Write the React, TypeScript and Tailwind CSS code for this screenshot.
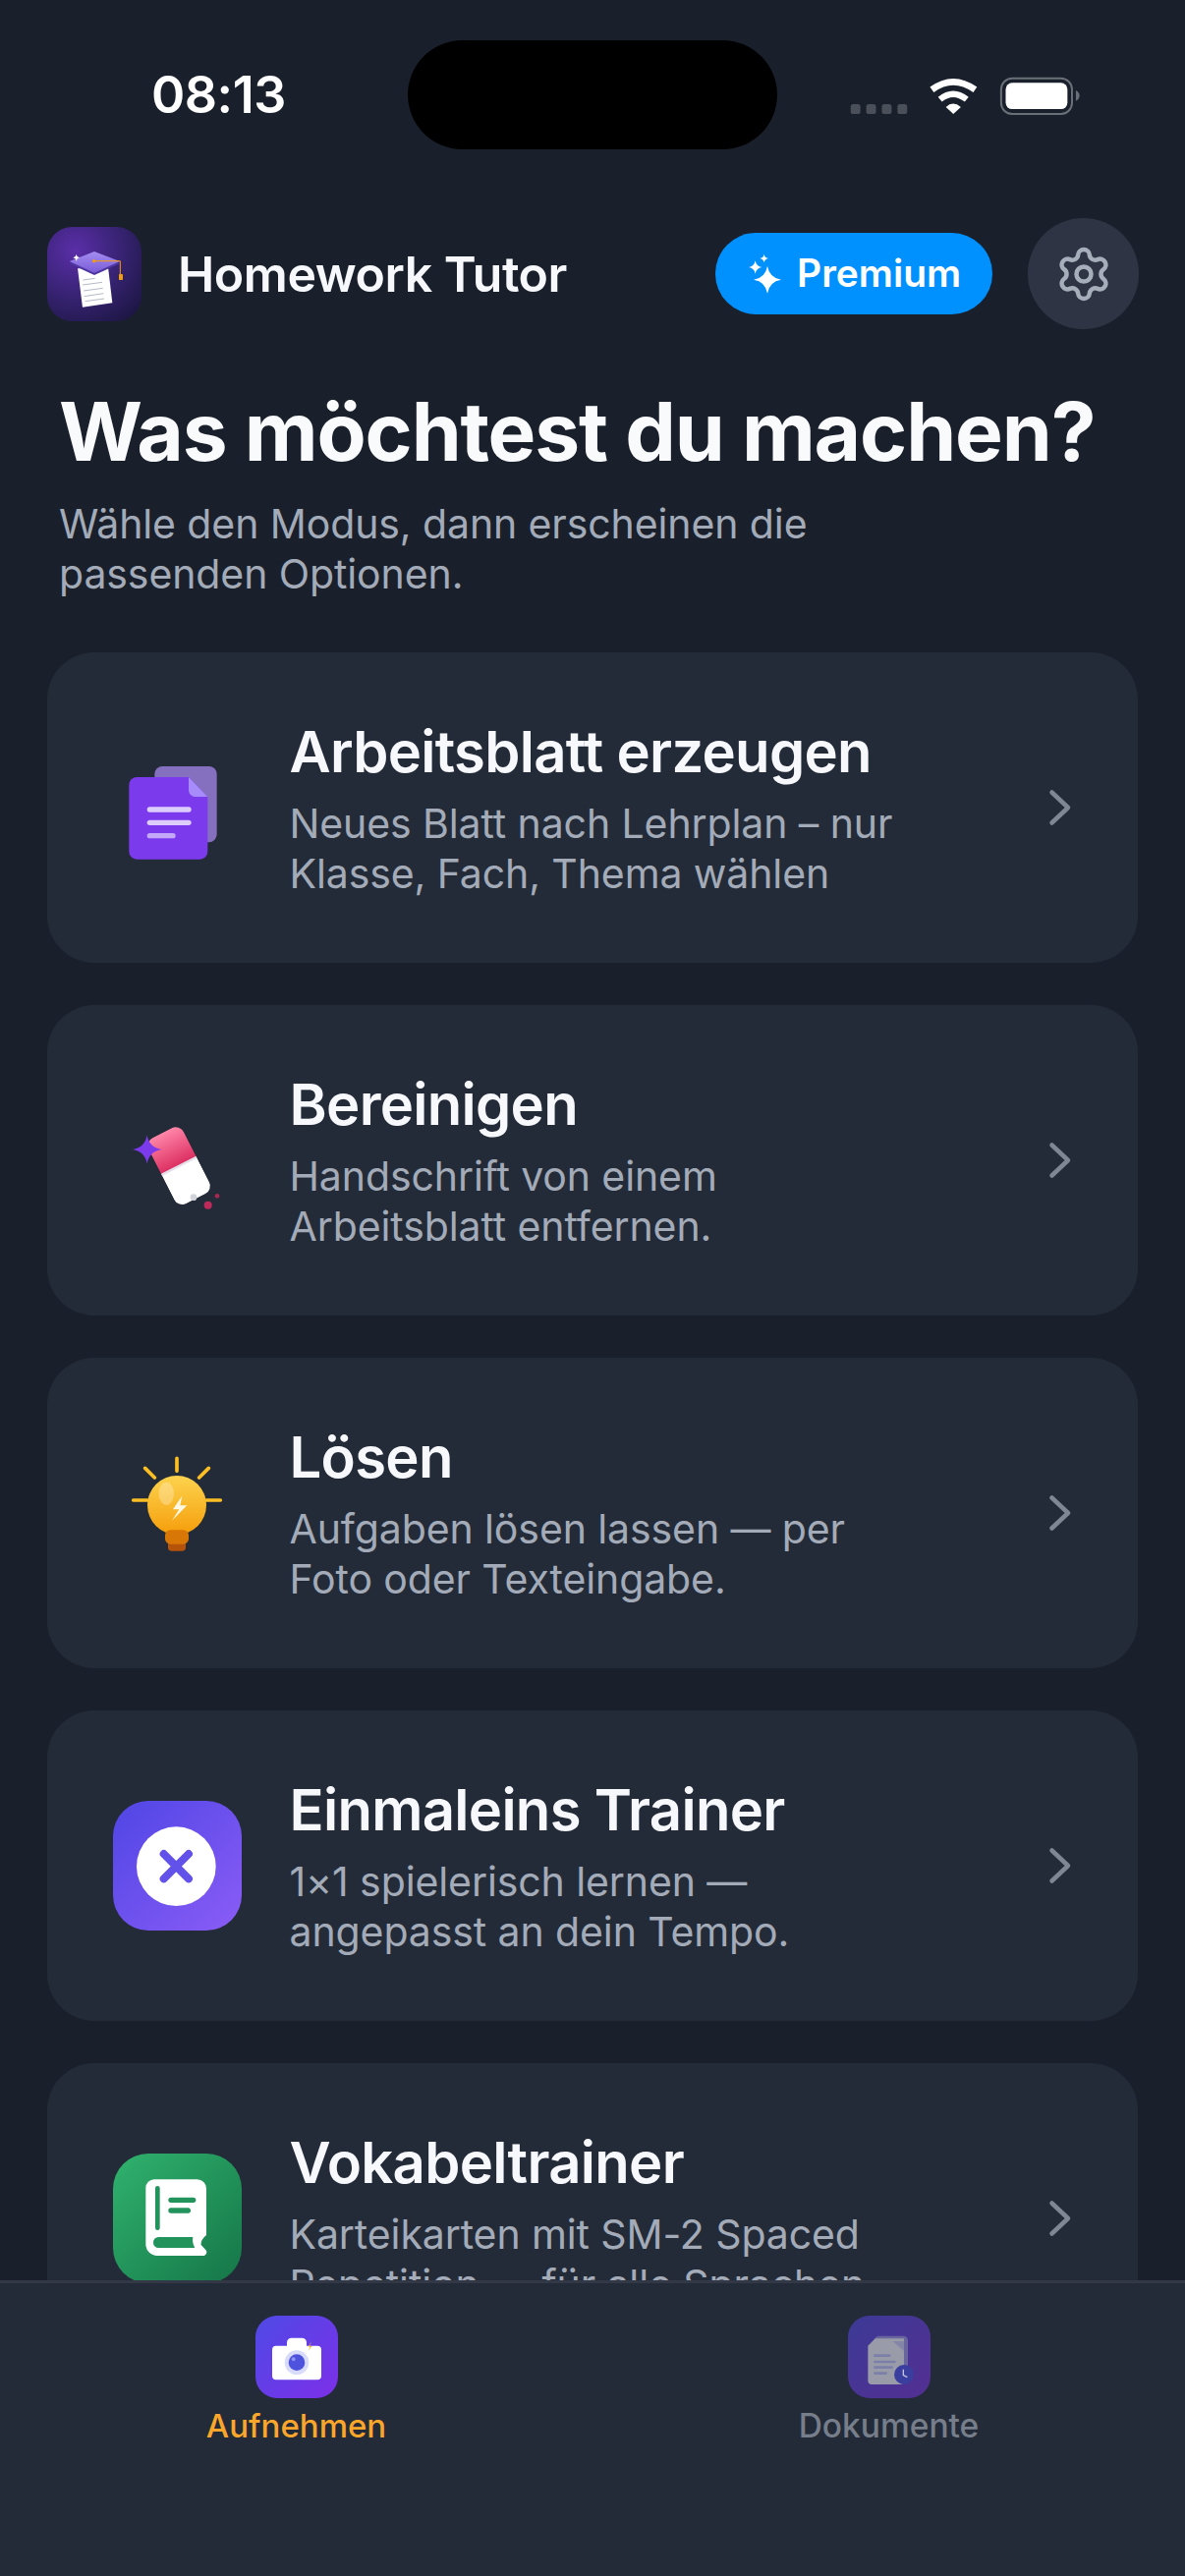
import { ReactNode } from "react"
import { Settings } from "lucide-react"

// 4 point star used by the sparkle icons
const star = (cx: number, cy: number, r: number) =>
  `M${cx} ${cy - r}Q${cx + r * 0.14} ${cy - r * 0.14} ${cx + r} ${cy}Q${cx + r * 0.14} ${cy + r * 0.14} ${cx} ${cy + r}Q${cx - r * 0.14} ${cy + r * 0.14} ${cx - r} ${cy}Q${cx - r * 0.14} ${cy - r * 0.14} ${cx} ${cy - r}Z`

function StatusIcons() {
  return (
    <svg width="243" height="43" viewBox="480 50 730 130" className="mt-[77px] ml-[69px]">
      {[495, 543, 591, 639].map((x) => (
        <rect key={x} x={x} y={138} width={30} height={30} rx={8} fill="#4a4f5a" />
      ))}
      <path d="M745 93Q810 45 878 93" fill="none" stroke="#fff" strokeWidth={20} />
      <path d="M770 123Q810 90 852 123" fill="none" stroke="#fff" strokeWidth={19} />
      <path d="M788 147Q810 126 834 147L811 168Z" fill="#fff" />
      <rect x={958} y={58} width={218} height={110} rx={34} fill="none" stroke="#6b7078" strokeWidth={6} />
      <rect x={972} y={72} width={190} height={81} rx={20} fill="#fff" />
      <path d="M1188 95Q1199 100 1199 111Q1199 122 1188 128Z" fill="#6b7078" />
    </svg>
  )
}

function LogoIcon() {
  return (
    <svg width="96" height="96" viewBox="54 63 288 288" className="shrink-0">
      <defs>
        <radialGradient id="logoBg" cx="0.3" cy="0.25" r="0.95">
          <stop offset="0" stopColor="#5a2ea8" />
          <stop offset="0.55" stopColor="#35226f" />
          <stop offset="1" stopColor="#1b1540" />
        </radialGradient>
        <linearGradient id="capFill" x1="0" y1="0" x2="0" y2="1">
          <stop offset="0" stopColor="#a48cf0" />
          <stop offset="1" stopColor="#7a5cd8" />
        </linearGradient>
      </defs>
      <rect x={54} y={63} width={288} height={288} rx={76} fill="url(#logoBg)" />
      <path d="M147 190L240 185L253 295L162 308Z" fill="#fff" />
      <path d="M163 225L200 220M162 240L222 232M165 258L224 250M167 275L226 266M170 290L228 282" stroke="#b4bac6" strokeWidth={3} fill="none" />
      <path d="M160 185Q198 225 238 183L240 175H158Z" fill="#6b42c4" />
      <path d="M198 146L276 175L198 210L122 175Z" fill="#4e36a0" />
      <path d="M198 138L276 168L198 203L122 168Z" fill="url(#capFill)" />
      <path d="M197 167H277V208" fill="none" stroke="#f59e0b" strokeWidth={3} />
      <circle cx={197} cy={167} r={5} fill="#f59e0b" />
      <rect x={273} y={207} width={12} height={18} rx={2} fill="#f59e0b" />
      <path d={star(143, 157, 10)} fill="#fff" />
    </svg>
  )
}

function SparkIcon() {
  return (
    <svg width="34" height="41" viewBox="185 595 102 123" className="shrink-0">
      <path d={star(242, 675, 42)} fill="#fff" />
      <path d={star(205, 637, 20)} fill="#fff" />
      <path d={star(232, 610, 13)} fill="#fff" />
    </svg>
  )
}

function DocIcon() {
  return (
    <svg width="132" height="132" viewBox="45 48 396 396">
      <rect x={172} y={120} width={190} height={232} rx={24} fill="#8570c0" />
      <path d="M118 153H276L334 213V380A24 24 0 0 1 310 404H118A24 24 0 0 1 94 380V177A24 24 0 0 1 118 153Z" fill="#7c3aed" />
      <path d="M276 153L334 213H296A20 20 0 0 1 276 193Z" fill="#a78bfa" />
      <rect x={149} y={244} width={135} height={16} rx={8} fill="#dccdfd" />
      <rect x={149} y={284} width={135} height={16} rx={8} fill="#dccdfd" />
      <rect x={149} y={324} width={87} height={16} rx={8} fill="#c4a8fa" />
    </svg>
  )
}

function EraserIcon() {
  return (
    <svg width="132" height="132" viewBox="45 16 396 396">
      <defs>
        <linearGradient id="eraserPink" x1="0" y1="0" x2="0" y2="1">
          <stop offset="0" stopColor="#ff86a8" />
          <stop offset="1" stopColor="#dc2f62" />
        </linearGradient>
        <clipPath id="eraserClip">
          <rect x={186} y={118} width={120} height={226} rx={28} />
        </clipPath>
      </defs>
      <g transform="rotate(-27 246 230)">
        <g clipPath="url(#eraserClip)">
          <rect x={186} y={118} width={120} height={112} fill="url(#eraserPink)" />
          <rect x={186} y={230} width={120} height={114} fill="#fff" />
          <rect x={186} y={228} width={120} height={7} fill="#e4e1ea" />
        </g>
      </g>
      <circle cx={291} cy={327} r={10} fill="#d1d5db" />
      <circle cx={335} cy={351} r={12} fill="#be2a5a" />
      <circle cx={363} cy={323} r={7} fill="#a8284f" />
      <path d={star(149, 181, 44)} fill="#7c3aed" />
    </svg>
  )
}

function BulbIcon() {
  return (
    <svg width="132" height="132" viewBox="45 45 396 396">
      <defs>
        <linearGradient id="bulbFill" x1="0" y1="0" x2="0" y2="1">
          <stop offset="0" stopColor="#fdd34e" />
          <stop offset="1" stopColor="#f59e0b" />
        </linearGradient>
      </defs>
      <path d="M240 76V115M143 106L172 135M337 106L308 135M107 204H150M330 204H373" stroke="#fbbf24" strokeWidth={11} strokeLinecap="round" fill="none" />
      <circle cx={240} cy={219} r={90} fill="url(#bulbFill)" />
      <ellipse cx={208} cy={184} rx={23} ry={35} fill="#fff" fillOpacity={0.27} />
      <rect x={213} y={330} width={54} height={29} rx={10} fill="#b45309" />
      <rect x={204} y={295} width={72} height={43} rx={16} fill="#d97706" />
      <path d="M256 191L228 232H247L225 266L271 220H250Z" fill="#fff8e4" />
    </svg>
  )
}

function TimesIcon() {
  return (
    <svg width="132" height="132" viewBox="45 36 396 396">
      <defs>
        <linearGradient id="timesBg" x1="0" y1="0" x2="1" y2="1">
          <stop offset="0" stopColor="#4f46e5" />
          <stop offset="1" stopColor="#8b5cf6" />
        </linearGradient>
      </defs>
      <rect x={45} y={36} width={393} height={396} rx={108} fill="url(#timesBg)" />
      <circle cx={238} cy={236} r={121} fill="#fff" />
      <path d="M200 198L276 274M276 198L200 274" stroke="#6352ea" strokeWidth={24} strokeLinecap="round" />
    </svg>
  )
}

function BookIcon() {
  return (
    <svg width="132" height="132" viewBox="45 36 396 396" className="shrink-0">
      <defs>
        <linearGradient id="bookBg" x1="0" y1="0" x2="1" y2="1">
          <stop offset="0" stopColor="#30b26e" />
          <stop offset="1" stopColor="#157547" />
        </linearGradient>
      </defs>
      <rect x={45} y={36} width={393} height={396} rx={108} fill="url(#bookBg)" />
      <path d="M171 115H302A28 28 0 0 1 330 143V285Q312 300 314 315L328 330Q336 340 324 348H180A35 35 0 0 1 145 313V141A26 26 0 0 1 171 115Z" fill="#fff" />
      <rect x={174} y={135} width={14} height={135} rx={7} fill="#23935c" />
      <rect x={214} y={170} width={84} height={16} rx={8} fill="#23935c" />
      <rect x={214} y={202} width={68} height={16} rx={8} fill="#23935c" />
      <path d="M184 291H289Q286 308 295 324H184A16 16 0 0 1 168 308V307A16 16 0 0 1 184 291Z" fill="#23935c" />
    </svg>
  )
}

function CameraIcon() {
  return (
    <svg width="84" height="84" viewBox="90 50 252 252">
      <defs>
        <linearGradient id="camBg" x1="0" y1="0" x2="1" y2="1">
          <stop offset="0" stopColor="#4f4ae6" />
          <stop offset="1" stopColor="#7c2fe8" />
        </linearGradient>
      </defs>
      <rect x={90} y={50} width={252} height={252} rx={66} fill="url(#camBg)" />
      <rect x={186} y={118} width={60} height={40} rx={14} fill="#fff" />
      <rect x={141} y={142} width={150} height={104} rx={12} fill="#fff" />
      <circle cx={216} cy={193} r={37} fill="#d8dcfa" />
      <circle cx={216} cy={193} r={25} fill="#4f52dc" />
      <circle cx={206} cy={183} r={6} fill="#8f92f2" />
      <path d="M262 127L255 143H263L250 158L257 145H251Z" fill="#fbbf24" />
    </svg>
  )
}

function ArchiveIcon() {
  return (
    <svg width="84" height="84" viewBox="69 50 252 252">
      <defs>
        <linearGradient id="docBg" x1="0" y1="0" x2="1" y2="1">
          <stop offset="0" stopColor="#3d3a96" />
          <stop offset="1" stopColor="#532f92" />
        </linearGradient>
      </defs>
      <rect x={69} y={50} width={252} height={252} rx={66} fill="url(#docBg)" />
      <rect x={150} y={112} width={102} height={130} rx={14} fill="#69669f" />
      <path d="M152 120H240V248A12 12 0 0 1 228 260H142A12 12 0 0 1 130 248V142Z" fill="#9a9ba8" />
      <path d="M205 128H240V158Z" fill="#8486a8" />
      <rect x={147} y={168} width={53} height={8} rx={4} fill="#7c80a8" />
      <rect x={147} y={187} width={68} height={8} rx={4} fill="#7c80a8" />
      <rect x={147} y={204} width={60} height={8} rx={4} fill="#7c80a8" />
      <rect x={147} y={222} width={42} height={8} rx={4} fill="#7c80a8" />
      <circle cx={240} cy={230} r={30} fill="#3a3e9e" />
      <path d="M238 214V232L250 238" fill="none" stroke="#c3c5dc" strokeWidth={4} />
    </svg>
  )
}

function Chevron() {
  return (
    <svg width="24" height="38" viewBox="0 0 24 38" className="shrink-0">
      <path d="M3.5 3.5L20 19L3.5 34.5" fill="none" stroke="#7f8794" strokeWidth={4.5} strokeLinecap="round" strokeLinejoin="round" />
    </svg>
  )
}

type Mode = { title: string; lines: string[]; icon: ReactNode }

const modes: Mode[] = [
  { title: "Arbeitsblatt erzeugen", lines: ["Neues Blatt nach Lehrplan – nur", "Klasse, Fach, Thema wählen"], icon: <DocIcon /> },
  { title: "Bereinigen", lines: ["Handschrift von einem", "Arbeitsblatt entfernen."], icon: <EraserIcon /> },
  { title: "Lösen", lines: ["Aufgaben lösen lassen — per", "Foto oder Texteingabe."], icon: <BulbIcon /> },
  { title: "Einmaleins Trainer", lines: ["1×1 spielerisch lernen —", "angepasst an dein Tempo."], icon: <TimesIcon /> },
  { title: "Vokabeltrainer", lines: ["Karteikarten mit SM-2 Spaced", "Repetition — für alle Sprachen"], icon: <BookIcon /> },
]

export default function App() {
  return (
    <div className="flex h-[2622px] w-[1206px] flex-col overflow-hidden bg-[#1a202b] font-['Inter',sans-serif] text-white">
      {/* status bar */}
      <div className="flex h-[222px] shrink-0 items-start">
        <div className="mt-[66px] w-[415px] pl-[154px] text-[52px] leading-[62px] font-semibold tracking-[-0.5px]">08:13</div>
        <div className="mt-[41px] h-[111px] w-[376px] rounded-[56px] bg-black" />
        <StatusIcons />
      </div>

      {/* header */}
      <div className="flex h-[113px] shrink-0 items-center pr-[47px] pl-[48px]">
        <LogoIcon />
        <div className="ml-[37px] flex-1 text-[50px] leading-[60px] font-semibold tracking-[-0.45px] text-[#f7f8fb]">Homework Tutor</div>
        <div className="flex h-[83px] w-[282px] items-center gap-[15px] rounded-full bg-[#0091ff] pl-[34px] text-[39px] font-semibold">
          <SparkIcon />
          <span>Premium</span>
        </div>
        <div className="ml-[36px] flex h-[113px] w-[113px] items-center justify-center rounded-full bg-[#2e3444]">
          <Settings size={60} strokeWidth={1.8} color="#a7aebb" />
        </div>
      </div>

      {/* heading */}
      <h1 className="mt-[57px] shrink-0 pl-[60px] text-[82px] leading-[96px] font-bold tracking-[-1.15px] text-[#f9fafb]">Was möchtest du machen?</h1>
      <p className="mt-[20px] shrink-0 pl-[60px] text-[41px] leading-[51px] tracking-[-0.1px] text-[#a3abb8]">
        Wähle den Modus, dann erscheinen die
        <br />
        passenden Optionen.
      </p>

      {/* mode list, cut off by the tab bar */}
      <div className="mt-[54px] flex min-h-0 flex-1 flex-col gap-[43px] overflow-hidden px-[48px]">
        {modes.map((m) => (
          <div key={m.title} className="flex h-[316px] shrink-0 items-center rounded-[48px] bg-[#242b38] pr-[67px] pl-[67px]">
            <div className="h-[132px] w-[132px] shrink-0">{m.icon}</div>
            <div className="ml-[47.5px] flex-1">
              <div className="text-[58px] leading-[72px] font-semibold tracking-[-0.7px] text-[#f7f8fb]">{m.title}</div>
              <div className="mt-[12px] text-[41px] leading-[51px] tracking-[-0.1px] text-[#a3abb8]">
                {m.lines.map((line) => (
                  <div key={line}>{line}</div>
                ))}
              </div>
            </div>
            <Chevron />
          </div>
        ))}
      </div>

      {/* tab bar */}
      <div className="grid h-[301px] shrink-0 grid-cols-2 border-t-[3px] border-[#323846] bg-[#242b38] pt-[33px]">
        <div className="flex flex-col items-center">
          <CameraIcon />
          <span className="mt-[8px] text-[33px] leading-[40px] font-medium text-[#f9a62b]">Aufnehmen</span>
        </div>
        <div className="flex flex-col items-center">
          <ArchiveIcon />
          <span className="mt-[8px] text-[33.5px] leading-[40px] font-medium text-[#777e8b]">Dokumente</span>
        </div>
      </div>
    </div>
  )
}
